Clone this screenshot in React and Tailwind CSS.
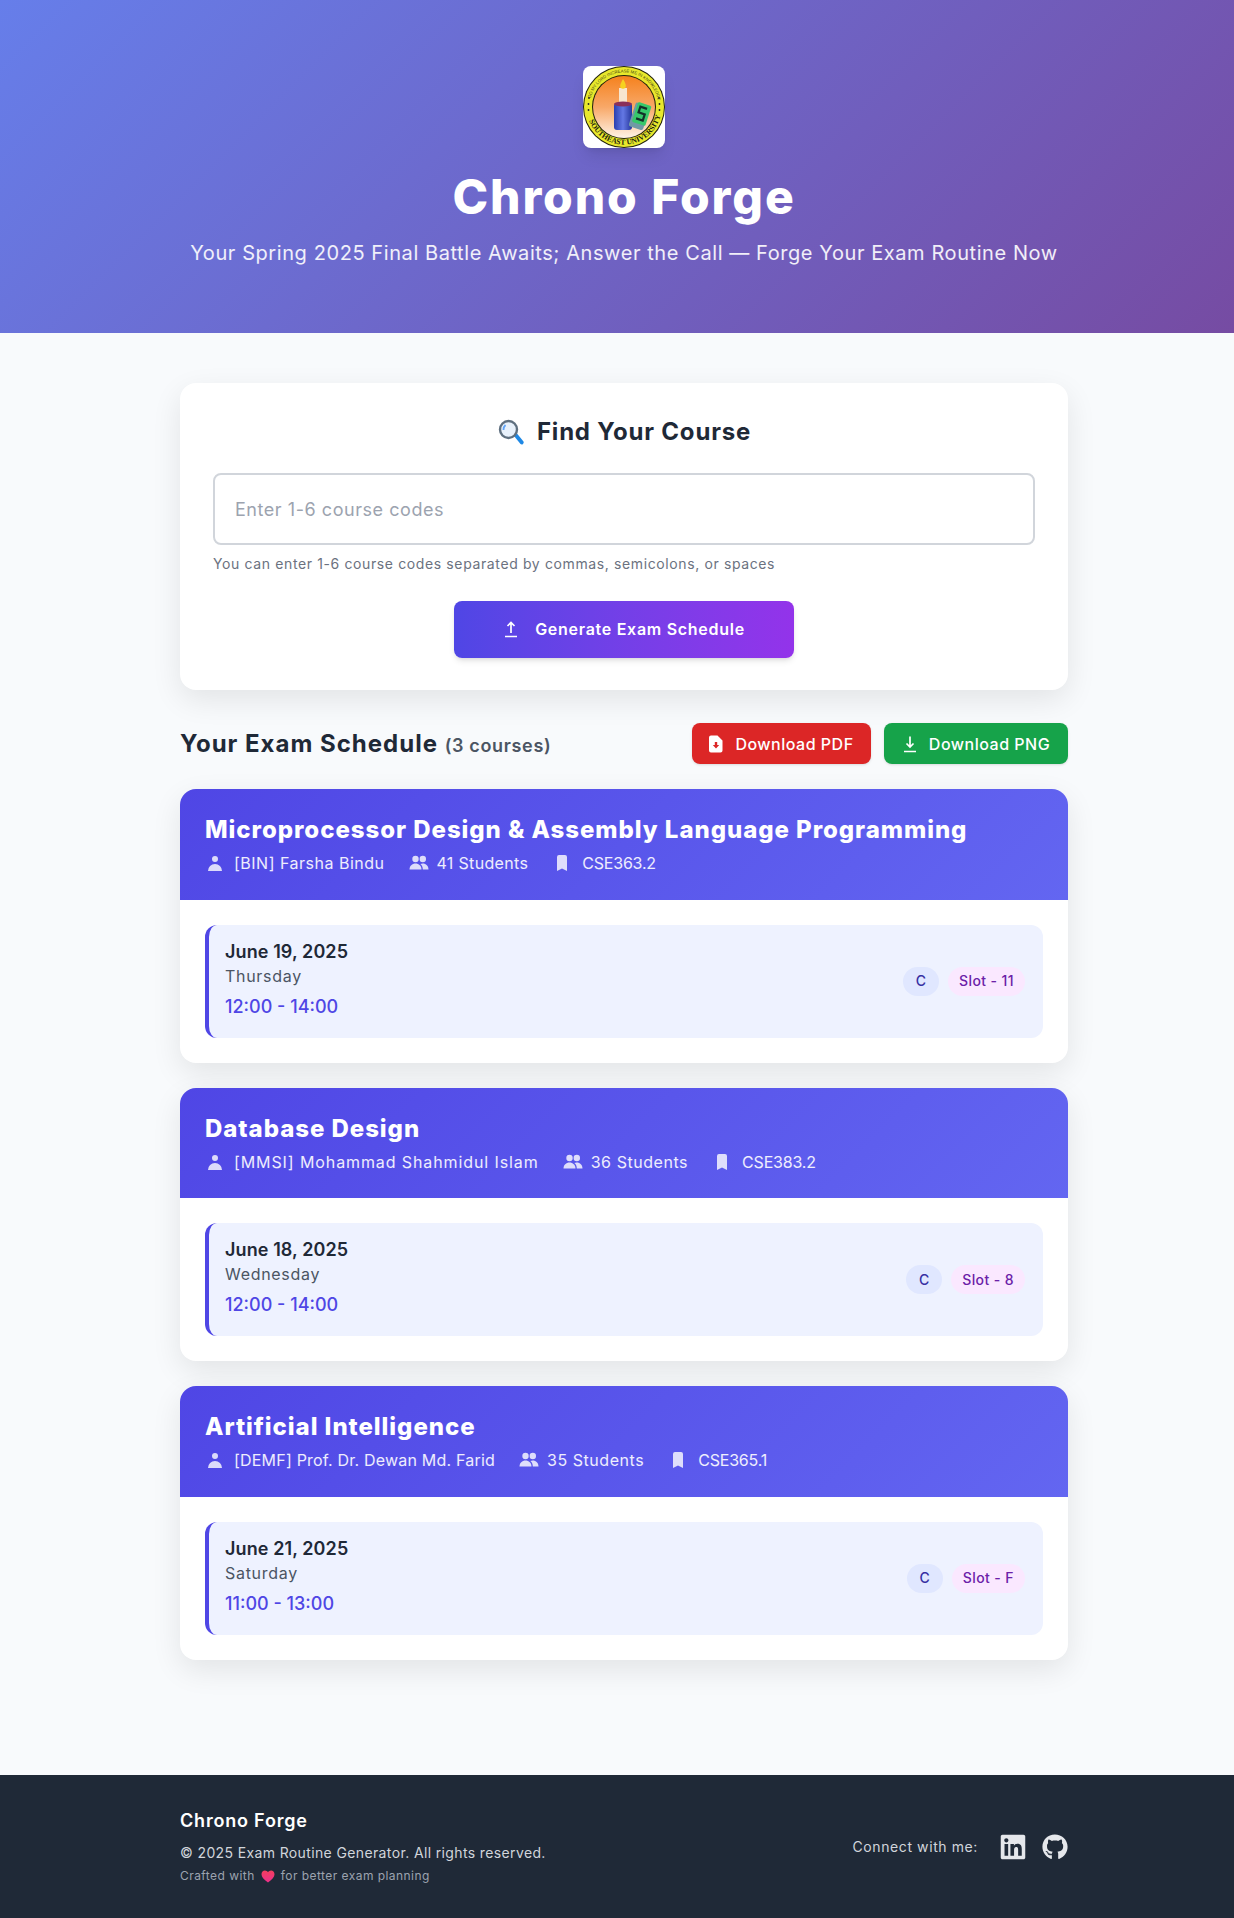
import React from 'react';
import { FaLinkedin, FaGithub } from 'react-icons/fa';
import { HiUser, HiBookmark } from 'react-icons/hi';

const courses = [
  { title: 'Microprocessor Design & Assembly Language Programming', teacher: '[BIN] Farsha Bindu', teacherTrack: 'tracking-[0.5px]', students: '41 Students', studentTrack: 'tracking-[0.33px]', code: 'CSE363.2', date: 'June 19, 2025', day: 'Thursday', time: '12:00 - 14:00', slot: 'Slot - 11' },
  { title: 'Database Design', teacher: '[MMSI] Mohammad Shahmidul Islam', teacherTrack: 'tracking-[0.9px]', students: '36 Students', studentTrack: 'tracking-[0.55px]', code: 'CSE383.2', date: 'June 18, 2025', day: 'Wednesday', time: '12:00 - 14:00', slot: 'Slot - 8' },
  { title: 'Artificial Intelligence', teacher: '[DEMF] Prof. Dr. Dewan Md. Farid', teacherTrack: 'tracking-[0.2px]', students: '35 Students', studentTrack: 'tracking-[0.55px]', code: 'CSE365.1', date: 'June 21, 2025', day: 'Saturday', time: '11:00 - 13:00', slot: 'Slot - F' },
];

const Logo = () => (
  <svg viewBox="0 0 82 82" className="w-full h-full">
    <defs>
      <linearGradient id="sun" x1="0" y1="0" x2="0" y2="1">
        <stop offset="0" stopColor="#f5811d" />
        <stop offset="0.5" stopColor="#f8a868" />
        <stop offset="1" stopColor="#fff3e6" />
      </linearGradient>
      <linearGradient id="can" x1="0" y1="0" x2="1" y2="0">
        <stop offset="0" stopColor="#2a3fb0" />
        <stop offset="0.5" stopColor="#6478e4" />
        <stop offset="1" stopColor="#26379c" />
      </linearGradient>
      <path id="topArc" d="M6.500 41a34.500 34.500 0 0 1 69 0" />
      <path id="botArc" d="M3.500 41a37.500 37.500 0 0 0 75 0" />
    </defs>
    <circle cx="41" cy="41" r="41" fill="#20200c" />
    <circle cx="41" cy="41" r="40" fill="#e8e82c" />
    <circle cx="41" cy="41" r="32" fill="#20200c" />
    <circle cx="41" cy="41" r="31" fill="url(#sun)" />
    <text fontSize="4.300" fontFamily="Liberation Sans, sans-serif" fill="#4a4a14">
      <textPath href="#topArc" startOffset="8%">GO MY LORD INCREASE ME IN KNOWLEDGE</textPath>
    </text>
    <text fontSize="7.500" fontWeight="700" fontFamily="Liberation Serif, serif" fill="#20200c">
      <textPath href="#botArc" startOffset="12%">SOUTHEAST UNIVERSITY</textPath>
    </text>
    <circle cx="6" cy="32" r="0.9" fill="#222" />
    <circle cx="5.500" cy="38" r="0.9" fill="#222" />
    <circle cx="5.500" cy="44" r="0.9" fill="#222" />
    <circle cx="76" cy="32" r="0.9" fill="#222" />
    <circle cx="76.500" cy="38" r="0.9" fill="#222" />
    <circle cx="76.500" cy="44" r="0.9" fill="#222" />
    <rect x="36" y="22" width="8" height="17" fill="#f7e6cf" />
    <path d="M40 13c2 3 2.800 5 2.800 7a2.800 2.800 0 0 1-5.600 0c0-2 1.300-4 2.800-7z" fill="#f6d21f" />
    <rect x="31" y="37" width="18" height="27" rx="3" fill="url(#can)" />
    <ellipse cx="40" cy="38" rx="9" ry="2.500" fill="#8a2f5a" />
    <g transform="rotate(18 57 50)">
      <rect x="49" y="38" width="15" height="25" rx="2" fill="#6f9aa5" />
      <rect x="51" y="37" width="14" height="21" rx="1.500" fill="#37c86b" />
      <path d="M61.500 41h-7v6h6.500v6.500H54" fill="none" stroke="#14302a" strokeWidth="2.200" />
    </g>
  </svg>
);

const SearchEmoji = () => (
  <svg viewBox="0 0 28 28" className="w-[28px] h-[28px] shrink-0">
    <path d="M17 18l3-2.500 6.500 8a2 2 0 0 1-3 2.500z" fill="#1e88e5" />
    <circle cx="11.500" cy="11.500" r="8.500" fill="#e8f1fb" stroke="#5f7080" strokeWidth="2.400" />
    <path d="M6.500 12a6 6 0 0 1 2-5" fill="none" stroke="#60a5fa" strokeWidth="1.800" />
  </svg>
);

const UploadIcon = () => (
  <svg viewBox="0 0 16 18" className="w-4 h-[18px] shrink-0" fill="none" stroke="white" strokeWidth="1.700">
    <path d="M2 16.500h12M8 13V2.500M4.500 6L8 2.500 11.500 6" />
  </svg>
);

const DownloadIcon = () => (
  <svg viewBox="0 0 16 18" className="w-4 h-[18px] shrink-0" fill="none" stroke="white" strokeWidth="1.700">
    <path d="M2 16.500h12M8 1.500V12M4.500 8.500L8 12l3.500-3.500" />
  </svg>
);

const PdfIcon = () => (
  <svg viewBox="0 0 14 18" className="w-[14px] h-[18px] shrink-0">
    <path d="M2 0.500h6.500L13.500 5.500V15.500a2 2 0 0 1-2 2h-9.500a2 2 0 0 1-2-2v-13a2 2 0 0 1 2-2z" fill="white" />
    <path d="M5.800 7h2.400v3h2L7 13.500 3.800 10h2z" fill="#dc2626" />
  </svg>
);

const PeopleIcon = () => (
  <svg viewBox="0 0 20 20" className="w-5 h-5 shrink-0 text-white/80" fill="currentColor">
    <circle cx="6.500" cy="6" r="3.200" />
    <circle cx="13.800" cy="6" r="3.200" />
    <path d="M0.500 16.500c0-3.500 2.700-6 6-6s6 2.500 6 6z" />
    <path d="M13.800 16.500h5.700c0-3.500-2.500-6-5.700-6-.9 0-1.700.2-2.400.5 1.500 1.300 2.400 3.200 2.400 5.500z" />
  </svg>
);

const Heart = () => (
  <svg viewBox="0 0 16 15" className="w-[14px] h-[13px] shrink-0">
    <defs>
      <linearGradient id="heart" x1="0" y1="0" x2="0" y2="1">
        <stop offset="0" stopColor="#f43f5e" />
        <stop offset="1" stopColor="#ec2f8c" />
      </linearGradient>
    </defs>
    <path d="M8 14.500C3 10.500 0.500 8 0.500 4.800 0.500 2.300 2.300 0.500 4.500 0.500 6 0.500 7.300 1.300 8 2.600 8.700 1.300 10 0.500 11.500 0.500c2.200 0 4 1.800 4 4.300C15.500 8 13 10.500 8 14.500z" fill="url(#heart)" />
  </svg>
);

const CourseCard = ({ course }) => (
  <div className="bg-white rounded-[16px] overflow-hidden shadow-[0_10px_30px_rgba(0,0,0,0.09)]">
    <div className="h-[110.5px] px-[25px] pt-[23px] bg-[linear-gradient(135deg,#4f46e5,#6366f1)] text-white">
      <h3 className="text-[24px] leading-[36px] font-extrabold tracking-[0.95px]">{course.title}</h3>
      <div className="flex items-center gap-[24px] text-[16px] leading-[24px] text-white/90 mt-[3px]">
        <span className={`flex items-center gap-[9px] ${course.teacherTrack}`}>
          <HiUser className="w-5 h-5 text-white/80" />
          {course.teacher}
        </span>
        <span className={`flex items-center gap-[8px] ${course.studentTrack}`}>
          <PeopleIcon />
          {course.students}
        </span>
        <span className="flex items-center gap-[10px] tracking-[-0.2px]">
          <HiBookmark className="w-5 h-5 text-white/80" />
          {course.code}
        </span>
      </div>
    </div>
    <div className="p-[25px]">
      <div className="h-[113px] flex items-center justify-between rounded-[12px] border-l-4 border-[#4f46e5] bg-[#eef2ff] pl-4 pr-[18px]">
        <div className="-mt-[3px]">
          <div className="-mt-[1px] text-[18px] leading-[27px] font-semibold tracking-[0.1px] text-[#1f2937]">{course.date}</div>
          <div className="text-[16px] leading-[24px] tracking-[0.7px] text-[#4b5563] -mt-[1px]">{course.day}</div>
          <div className="text-[18px] leading-[28px] font-medium text-[#4f46e5] mt-[5px]">{course.time}</div>
        </div>
        <div className="flex items-center gap-[9px]">
          <span className="h-[29px] flex items-center px-[13px] pb-[1px] rounded-full bg-[#e0e7ff] text-[#3730a3] text-[14px] font-medium">C</span>
          <span className="h-[29px] flex items-center px-[11px] pb-[1px] rounded-full bg-[#fae8ff] text-[#6b21a8] text-[14px] font-medium tracking-[0.4px]">{course.slot}</span>
        </div>
      </div>
    </div>
  </div>
);

export default function App() {
  return (
    <div className="overflow-hidden">
      <div className="w-[1248px] min-h-[1918px] flex flex-col bg-[#f8fafc] font-['Inter',sans-serif]">
        <header className="h-[333px] flex flex-col items-center pt-[66px] bg-[linear-gradient(135deg,#667eea,#764ba2)] text-white">
          <div className="w-[82px] h-[82px] bg-white rounded-[8px] overflow-hidden shadow-lg">
            <Logo />
          </div>
          <h1 className="mt-[19px] text-[48px] leading-[60px] font-extrabold tracking-[1.9px]">Chrono Forge</h1>
          <p className="mt-[11px] text-[20px] leading-[30px] tracking-[0.58px] text-white/90">Your Spring 2025 Final Battle Awaits; Answer the Call — Forge Your Exam Routine Now</p>
        </header>

        <main className="w-[888px] mx-auto pt-[50px]">
          <section className="h-[307px] bg-white rounded-[16px] px-[33px] pt-[31px] shadow-[0_10px_30px_rgba(0,0,0,0.09)]">
            <h2 className="flex items-center justify-center gap-[12px] text-[24px] leading-[36px] font-bold tracking-[0.8px] text-[#1f2937]">
              <SearchEmoji />
              Find Your Course
            </h2>
            <input
              readOnly
              placeholder="Enter 1-6 course codes"
              className="mt-[23px] w-full h-[72px] rounded-[8px] border-2 border-[#d1d5db] bg-white px-[20px] text-[18px] tracking-[0.55px] text-[#1f2937] placeholder:text-[#9ca3af] outline-none"
            />
            <p className="mt-[8px] text-[14px] leading-[21px] tracking-[0.62px] text-[#6b7280]">You can enter 1-6 course codes separated by commas, semicolons, or spaces</p>
            <div className="flex justify-center mt-[27px]">
              <button className="w-[340px] h-[57px] flex items-center justify-center gap-[16px] pb-[2px] rounded-[8px] bg-linear-to-r from-[#4f46e5] to-[#9333ea] text-white text-[16px] tracking-[0.72px] font-semibold shadow-md">
                <UploadIcon />
                Generate Exam Schedule
              </button>
            </div>
          </section>

          <div className="flex items-center justify-between mt-[33px] h-[41px]">
            <h2 className="text-[24px] font-bold tracking-[1px] text-[#1f2937]">
              Your Exam Schedule <span className="text-[18px] font-semibold tracking-[0.66px] text-[#4b5563]">(3 courses)</span>
            </h2>
            <div className="flex gap-[13px]">
              <button className="w-[179px] h-[41px] flex items-center justify-center gap-[12px] rounded-[8px] bg-[#dc2626] text-white text-[16px] tracking-[0.5px] font-medium shadow-sm">
                <PdfIcon />
                Download PDF
              </button>
              <button className="w-[184px] h-[41px] flex items-center justify-center gap-[11px] rounded-[8px] bg-[#16a34a] text-white text-[16px] tracking-[0.5px] font-medium shadow-sm">
                <DownloadIcon />
                Download PNG
              </button>
            </div>
          </div>

          <div className="flex flex-col gap-[25px] mt-[25px]">
            {courses.map((course) => (
              <CourseCard key={course.code} course={course} />
            ))}
          </div>
        </main>

        <footer className="mt-auto h-[143px] bg-[#1f2937]">
          <div className="w-[888px] h-full mx-auto flex items-center justify-between">
            <div className="-mt-[1px]">
              <div className="text-[18px] leading-[30px] font-semibold tracking-[0.8px] text-white">Chrono Forge</div>
              <div className="mt-[6px] text-[14px] leading-[22px] tracking-[0.37px] text-[#d1d5db]">© 2025 Exam Routine Generator. All rights reserved.</div>
              <div className="mt-[2px] flex items-center gap-[6px] text-[12px] leading-[20px] tracking-[0.45px] text-[#9ca3af]">
                Crafted with <Heart /> for better exam planning
              </div>
            </div>
            <div className="flex items-center gap-[21px]">
              <span className="text-[14px] tracking-[0.6px] text-[#d1d5db]">Connect with me:</span>
              <div className="flex items-center gap-[15px] text-[#e5e7eb]">
                <FaLinkedin className="w-[28px] h-[28px]" />
                <FaGithub className="w-[26px] h-[26px]" />
              </div>
            </div>
          </div>
        </footer>
      </div>
    </div>
  );
}
